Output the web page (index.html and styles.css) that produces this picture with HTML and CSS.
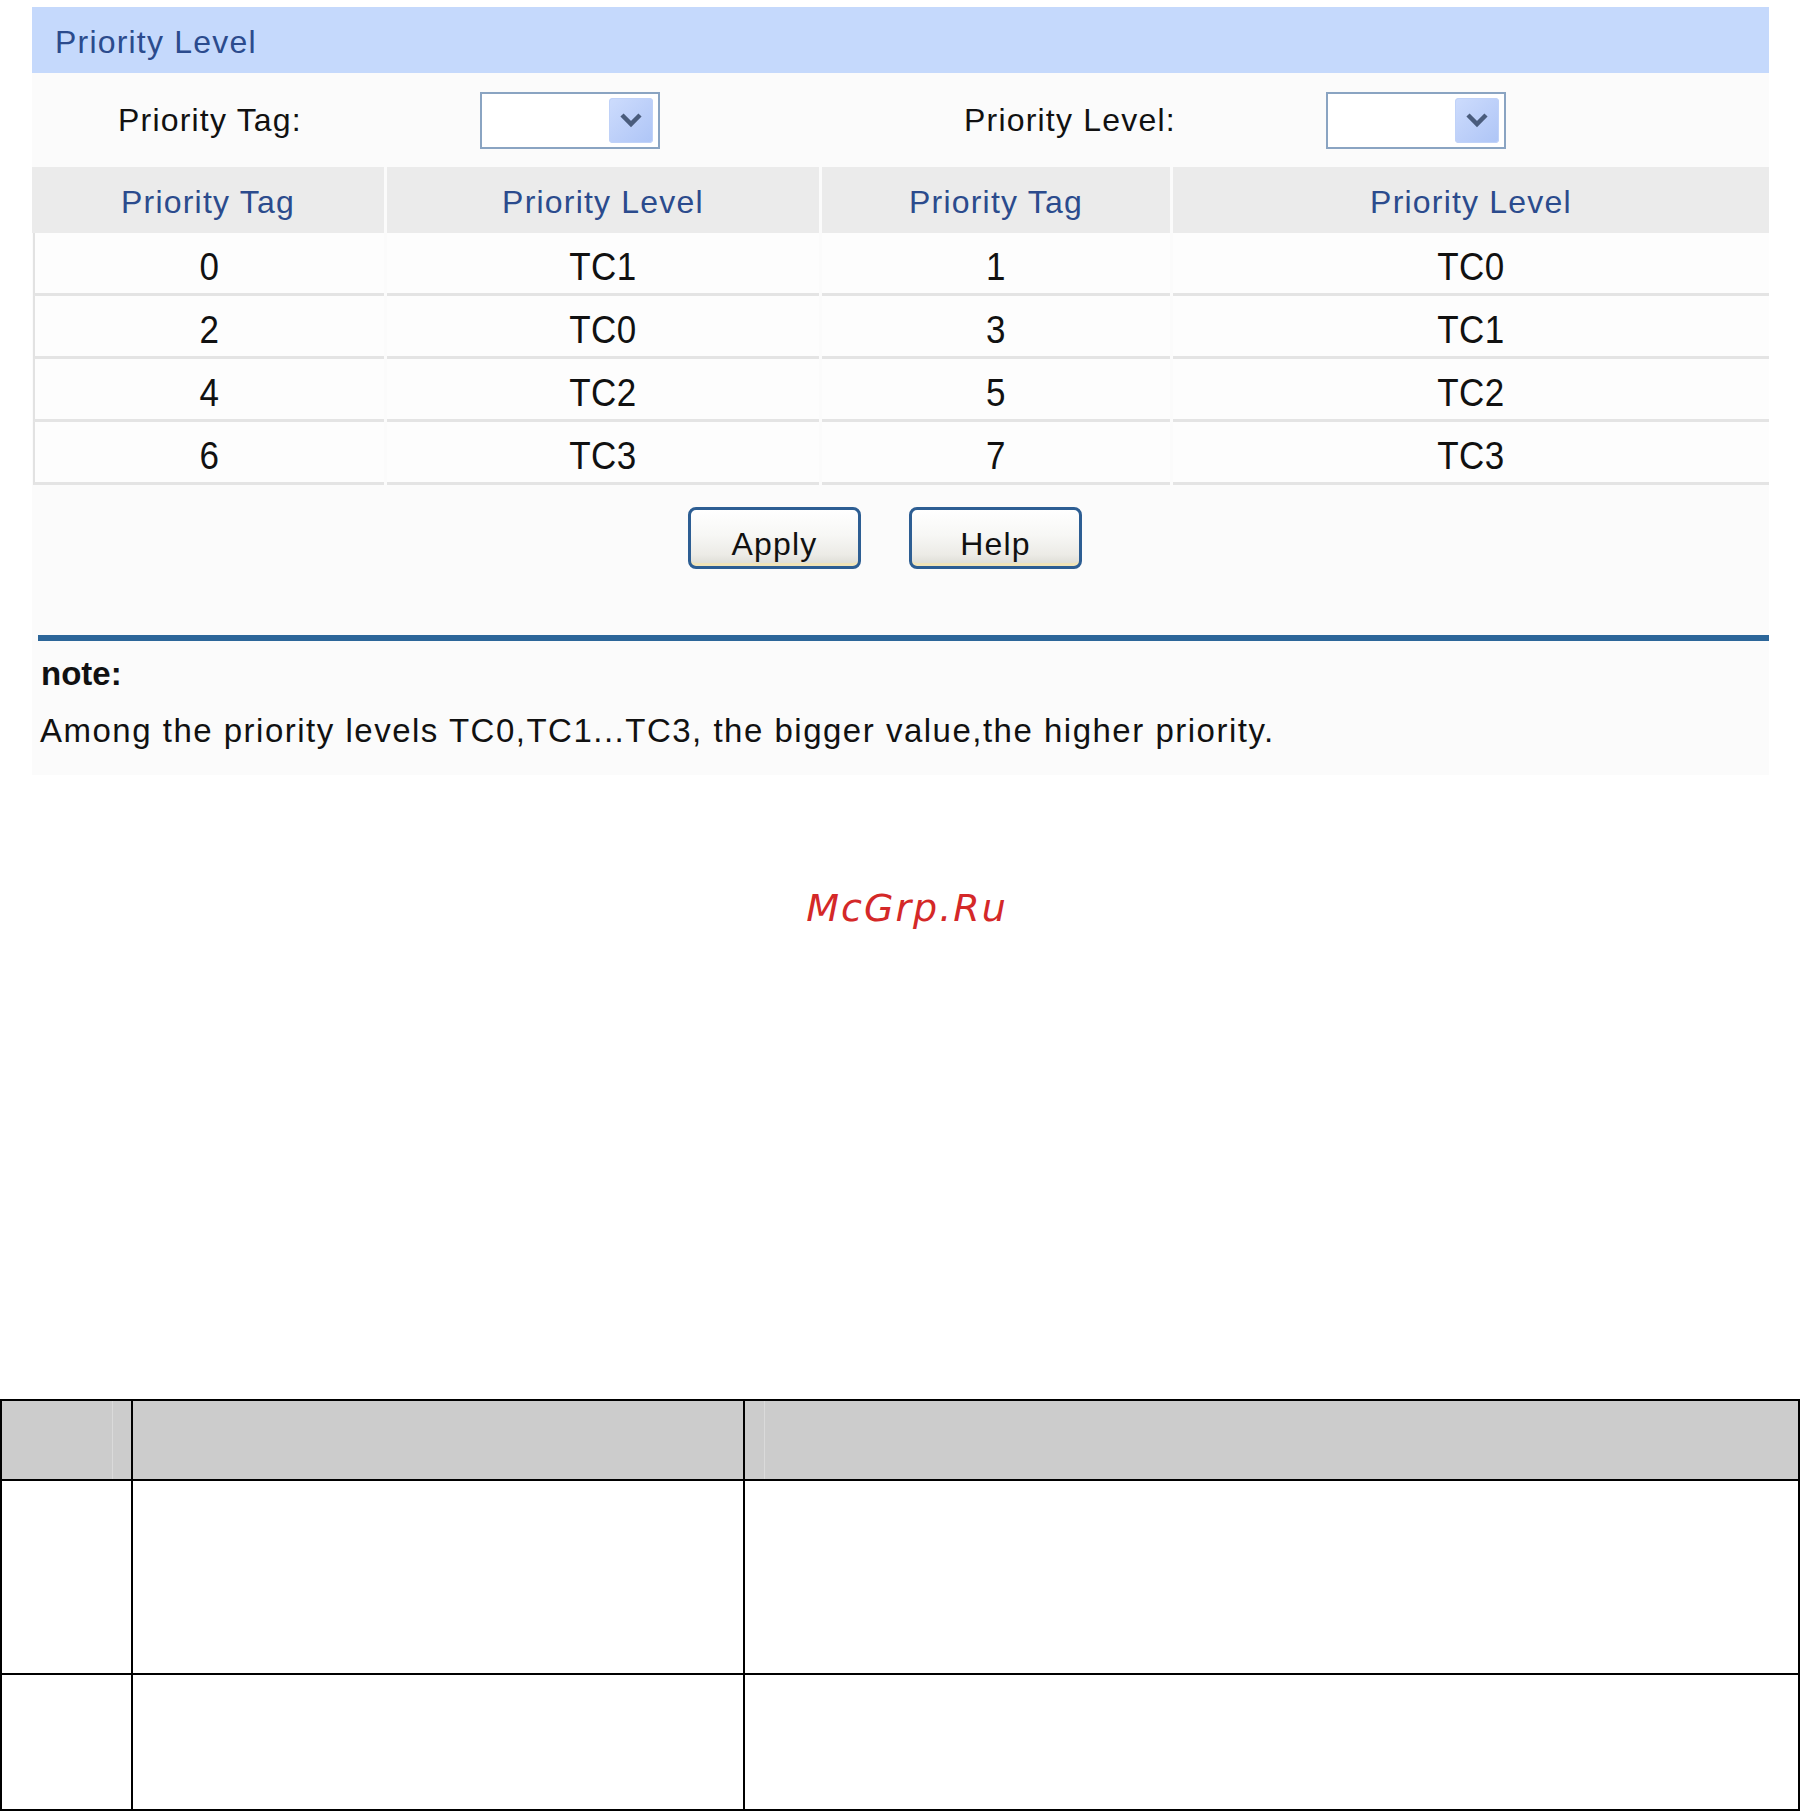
FILE: index.html
```html
<!DOCTYPE html>
<html lang="en">
<head>
<meta charset="utf-8">
<title>Priority Level</title>
<link rel="stylesheet" href="styles.css">
</head>
<body>
<div class="panel">
  <div class="title-bar">Priority Level</div>
  <div class="form-row">
    <span class="label">Priority Tag:</span>
    <div class="select"><span class="select-btn"><svg width="26" height="16" viewBox="0 0 26 16"><path d="M4 3 L13 12 L22 3" fill="none" stroke="#4a5c7c" stroke-width="4.5"/></svg></span></div>
    <span></span>
    <span class="label">Priority Level:</span>
    <div class="select"><span class="select-btn"><svg width="26" height="16" viewBox="0 0 26 16"><path d="M4 3 L13 12 L22 3" fill="none" stroke="#4a5c7c" stroke-width="4.5"/></svg></span></div>
  </div>
  <div class="map">
    <div class="map-row head">
      <div class="cell">Priority Tag</div>
      <div class="cell">Priority Level</div>
      <div class="cell">Priority Tag</div>
      <div class="cell">Priority Level</div>
    </div>
    <div class="map-row">
      <div class="cell"><span class="v">0</span></div>
      <div class="cell"><span class="v">TC1</span></div>
      <div class="cell"><span class="v">1</span></div>
      <div class="cell"><span class="v">TC0</span></div>
    </div>
    <div class="map-row">
      <div class="cell"><span class="v">2</span></div>
      <div class="cell"><span class="v">TC0</span></div>
      <div class="cell"><span class="v">3</span></div>
      <div class="cell"><span class="v">TC1</span></div>
    </div>
    <div class="map-row">
      <div class="cell"><span class="v">4</span></div>
      <div class="cell"><span class="v">TC2</span></div>
      <div class="cell"><span class="v">5</span></div>
      <div class="cell"><span class="v">TC2</span></div>
    </div>
    <div class="map-row">
      <div class="cell"><span class="v">6</span></div>
      <div class="cell"><span class="v">TC3</span></div>
      <div class="cell"><span class="v">7</span></div>
      <div class="cell"><span class="v">TC3</span></div>
    </div>
  </div>
  <div class="actions">
    <button class="btn" type="button">Apply</button>
    <button class="btn" type="button">Help</button>
  </div>
  <div class="rule"></div>
  <div class="note-title">note:</div>
  <div class="note-text">Among the priority levels TC0,TC1...TC3, the bigger value,the higher priority.</div>
</div>
<div class="watermark">McGrp.Ru</div>
<div class="doc-table">
  <div class="dcell h c1"></div>
  <div class="dcell h c2"></div>
  <div class="dcell h c3"></div>
  <div class="dcell r1"></div>
  <div class="dcell r1"></div>
  <div class="dcell r1"></div>
  <div class="dcell r2"></div>
  <div class="dcell r2"></div>
  <div class="dcell r2"></div>
</div>
</body>
</html>
```
FILE: styles.css
```css
html, body {
  margin: 0;
  padding: 0;
  background: #ffffff;
}
body {
  font-family: "Liberation Sans", Arial, sans-serif;
  color: #111111;
  overflow: hidden;
}
.panel {
  margin: 7px 0 0 32px;
  width: 1737px;
  background: #fbfbfb;
  padding-bottom: 24px;
}
.title-bar {
  box-sizing: border-box;
  height: 66px;
  line-height: 61px;
  padding-top: 5px;
  background: #c5d9fc;
  color: #2b4b8d;
  font-size: 32px;
  letter-spacing: 1.2px;
  padding-left: 23px;
}
.form-row {
  height: 94px;
  display: grid;
  grid-template-columns: 362px 180px 304px 362px 180px;
  align-items: center;
  padding-left: 86px;
}
.label {
  font-size: 32px;
  letter-spacing: 1.2px;
  color: #111111;
}
.select {
  box-sizing: border-box;
  width: 180px;
  height: 57px;
  border: 2px solid #8aa4c2;
  background: #ffffff;
  display: flex;
  justify-content: flex-end;
  align-items: center;
  padding: 0 5px;
}
.select-btn {
  width: 44px;
  height: 45px;
  border-radius: 4px;
  background: linear-gradient(135deg, #cddcfd 0%, #bccff9 55%, #aec5f6 100%);
  box-shadow: inset 0 0 0 1px #c0d2f8;
  display: flex;
  align-items: center;
  justify-content: center;
}
.map-row {
  display: grid;
  grid-template-columns: 352px 432px 348px 1fr;
  column-gap: 3px;
}
.cell {
  box-sizing: border-box;
  height: 63px;
  padding-top: 7px;
  display: flex;
  align-items: center;
  justify-content: center;
  background: #fdfdfd;
  border-bottom: 3px solid #e4e4e4;
  font-size: 35px;
  color: #111111;
}
.map-row .cell:first-child {
  border-left: 2px solid #e2e2e2;
  margin-left: 1px;
}
.map-row.head .cell {
  height: 66px;
  padding-top: 5px;
  background: #ebebeb;
  border-bottom: none;
  color: #2b4b8d;
  font-size: 32px;
  letter-spacing: 1.2px;
}
.map-row.head .cell:first-child {
  border-left: none;
  margin-left: 0;
}
.v {
  display: inline-block;
  transform: scaleY(1.12);
  letter-spacing: 0.5px;
}
.actions {
  display: flex;
  gap: 48px;
  padding: 22px 0 66px 656px;
}
.btn {
  box-sizing: border-box;
  width: 173px;
  height: 62px;
  border: 3px solid #2d5e93;
  border-radius: 8px;
  background: linear-gradient(#ffffff 0%, #f7f7f5 45%, #ecebe6 80%, #dcdbd3 100%);
  box-shadow: inset 0 -6px 0 -3px #f1e4b8;
  font-family: "Liberation Sans", Arial, sans-serif;
  font-size: 32px;
  letter-spacing: 1.2px;
  color: #111111;
  padding: 12px 0 0 0;
}
.rule {
  margin-left: 6px;
  height: 6px;
  background: #2c6699;
}
.note-title {
  margin-top: 13px;
  padding-left: 9px;
  line-height: 40px;
  font-size: 33px;
  font-weight: bold;
  color: #111111;
}
.note-text {
  margin-top: 17px;
  padding-left: 8px;
  line-height: 40px;
  font-size: 33px;
  letter-spacing: 1.5px;
  color: #111111;
}
.watermark {
  margin-top: 111px;
  height: 44px;
  line-height: 44px;
  text-align: center;
  padding-left: 12px;
  font-family: "DejaVu Sans", sans-serif;
  font-style: italic;
  font-size: 38px;
  letter-spacing: 2px;
  color: #d42828;
}
.doc-table {
  margin-top: 469px;
  width: 1800px;
  box-sizing: border-box;
  border-top: 2px solid #000000;
  border-left: 2px solid #000000;
  display: grid;
  grid-template-columns: 131px 612px 1055px;
  grid-template-rows: 80px 194px 136px;
}
.dcell {
  box-sizing: border-box;
  border-right: 2px solid #000000;
  border-bottom: 2px solid #000000;
  background: #ffffff;
}
.dcell.h {
  background: #cccccc;
}
.dcell.h.c1 {
  background: linear-gradient(to right, #cccccc 110px, #dadada 110px, #dadada 111px, #cccccc 111px);
}
.dcell.h.c3 {
  background: linear-gradient(to right, #cccccc 19px, #dadada 19px, #dadada 20px, #cccccc 20px);
}
```
